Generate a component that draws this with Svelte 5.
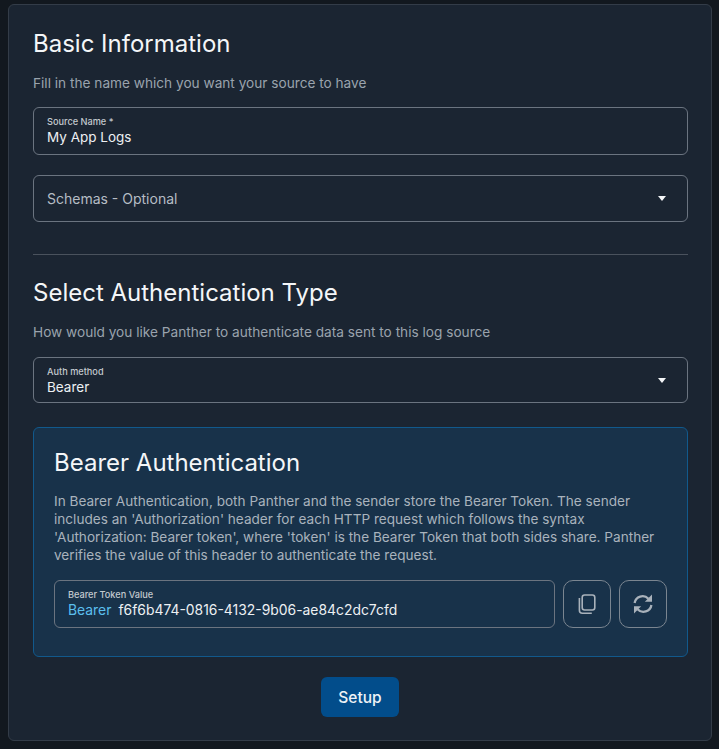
<script>
  let sourceName = "My App Logs";
  let token = "f6f6b474-0816-4132-9b06-ae84c2dc7cfd";
</script>

<main class="page">
  <section class="card">
    <h2>Basic Information</h2>
    <p class="hint">Fill in the name which you want your source to have</p>

    <div class="field first">
      <span class="label">Source Name *</span>
      <span class="value">{sourceName}</span>
    </div>

    <div class="field select placeholder">
      <span class="value muted">Schemas - Optional</span>
      <span class="caret"></span>
    </div>

    <div class="divider"></div>

    <h2>Select Authentication Type</h2>
    <p class="hint">How would you like Panther to authenticate data sent to this log source</p>

    <div class="field select auth">
      <div class="auth-text">
        <span class="label">Auth method</span>
        <span class="value">Bearer</span>
      </div>
      <span class="caret"></span>
    </div>

    <div class="panel">
      <h2>Bearer Authentication</h2>
      <p class="desc">
        In Bearer Authentication, both Panther and the sender store the Bearer Token. The sender
        includes an 'Authorization' header for each HTTP request which follows the syntax
        'Authorization: Bearer token', where 'token' is the Bearer Token that both sides share. Panther
        verifies the value of this header to authenticate the request.
      </p>
      <div class="token-row">
        <div class="field token">
          <span class="label">Bearer Token Value</span>
          <span class="value"><span class="prefix">Bearer</span>{token}</span>
        </div>
        <button class="icon-btn" aria-label="Copy">
          <svg width="18" height="20" viewBox="0 0 18 20" fill="none" stroke="#a9b2bb" stroke-width="1.6">
            <rect x="4.2" y="1" width="12.6" height="15" rx="2.4" />
            <path d="M1.4 4v12.2a3 3 0 0 0 3 3h9.4" />
          </svg>
        </button>
        <button class="icon-btn" aria-label="Regenerate">
          <svg width="20" height="20" viewBox="0 0 20 20" fill="none" stroke="#a9b2bb" stroke-width="2.3">
            <path d="M1.6 9A8 8 0 0 1 15.4 4.8" />
            <path d="M18.4 11A8 8 0 0 1 4.6 15.2" />
            <path d="M19 0.6v7.2h-7.2z" fill="#a9b2bb" stroke="none" />
            <path d="M1 19.4v-7.2h7.2z" fill="#a9b2bb" stroke="none" />
          </svg>
        </button>
      </div>
    </div>

    <div class="actions">
      <button class="setup">Setup</button>
    </div>
  </section>
</main>

<style>
  :global(body) {
    margin: 0;
    background: #12181f;
  }

  .page {
    width: 719px;
    height: 749px;
    box-sizing: border-box;
    padding: 4px 7px 8px 8px;
    font-family: "Inter", "Noto Sans", sans-serif;
    color: #f4f6f8;
  }

  .card {
    height: 100%;
    box-sizing: border-box;
    padding: 24px 23px 0 24px;
    background: #1b2532;
    border: 1px solid #333c48;
    border-radius: 6px;
  }

  h2 {
    margin: 0;
    font-size: 24px;
    line-height: 30px;
    font-weight: 400;
  }

  .hint {
    margin: 14px 0 0;
    font-size: 13.65px;
    line-height: 20px;
    color: #9aa3ad;
  }

  .field {
    box-sizing: border-box;
    height: 48px;
    padding: 8px 13px 0;
    border: 1px solid #6b7480;
    border-radius: 6px;
  }

  .first {
    margin-top: 14px;
  }

  .select {
    display: flex;
    align-items: center;
    justify-content: space-between;
    height: 47px;
    padding: 0 21px 0 13px;
  }

  .placeholder {
    margin-top: 20px;
  }

  .auth {
    height: 46px;
    margin-top: 15px;
  }

  .auth-text {
    margin-top: 2px;
  }

  .label {
    display: block;
    font-size: 9.2px;
    line-height: 11px;
    font-weight: 500;
    color: #c3c9cf;
  }

  .value {
    display: block;
    margin-top: 1px;
    font-size: 13.5px;
    line-height: 18px;
    color: #edf0f3;
  }

  .muted {
    margin-top: 0;
    font-size: 14px;
    color: #b6bdc5;
  }

  .caret {
    width: 0;
    height: 0;
    border-left: 4.5px solid transparent;
    border-right: 4.5px solid transparent;
    border-top: 5px solid #f4f6f8;
  }

  .divider {
    height: 1px;
    margin: 32px 0 23px;
    background: #4a525d;
  }

  .panel {
    margin-top: 24px;
    height: 230px;
    box-sizing: border-box;
    padding: 20px 20px 0;
    background: #18324a;
    border: 1px solid #11598c;
    border-radius: 6px;
  }

  .desc {
    margin: 14px 0 0;
    font-size: 13.6px;
    line-height: 18px;
    color: #a9b3bd;
  }

  .token-row {
    display: flex;
    gap: 8px;
    margin-top: 16px;
  }

  .token {
    flex: 1;
  }

  .token .value {
    font-size: 13.9px;
  }

  .prefix {
    margin-right: 7px;
    color: #5bbfee;
  }

  .icon-btn {
    width: 48px;
    height: 48px;
    display: flex;
    align-items: center;
    justify-content: center;
    padding: 0;
    background: none;
    border: 1px solid #7a8590;
    border-radius: 10px;
  }

  .actions {
    display: flex;
    justify-content: center;
    margin-top: 20px;
    padding-right: 1px;
  }

  .setup {
    width: 78px;
    height: 40px;
    padding: 0;
    font-family: inherit;
    font-size: 15.5px;
    font-weight: 500;
    color: #eef2f6;
    background: #024d8b;
    border: none;
    border-radius: 6px;
  }
</style>
